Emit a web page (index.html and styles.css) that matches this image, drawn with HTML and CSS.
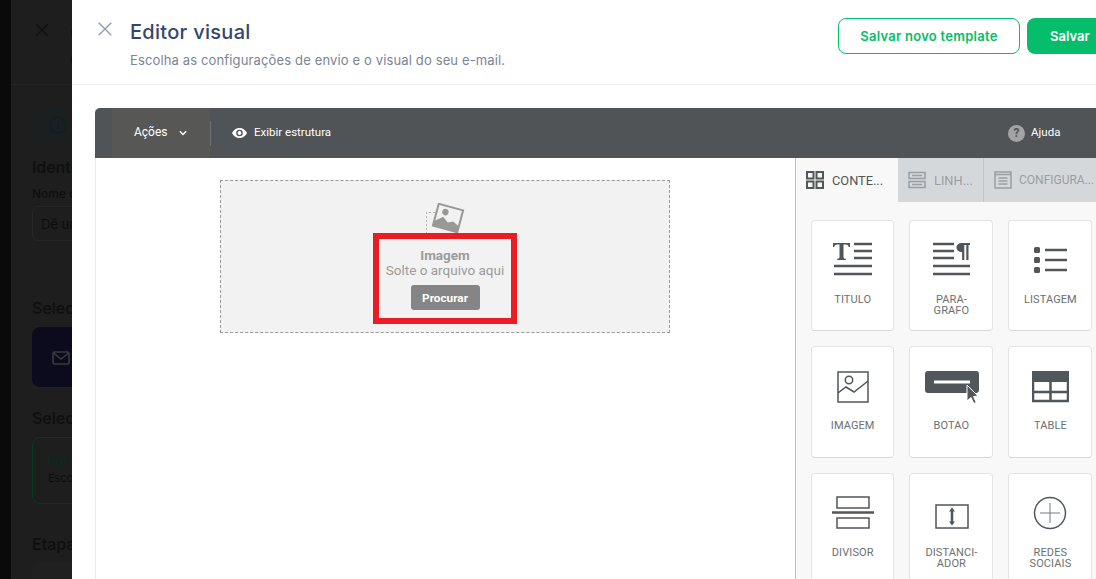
FILE: index.html
```html
<!DOCTYPE html>
<html lang="pt-BR">
<head>
<meta charset="utf-8">
<title>Editor visual</title>
<link rel="stylesheet" href="styles.css">
</head>
<body>
<div class="page">
  <aside class="rail"></aside>
  <div class="behind">
    <div class="behind-head">
      <svg class="behind-x" width="14" height="14" viewBox="0 0 14 14"><path d="M1 1l12 12M13 1L1 13"/></svg>
      <div class="behind-title">Criar<small>Crie</small></div>
    </div>
    <div class="behind-body">
      <div class="b-info"><svg width="18" height="18" viewBox="0 0 18 18"><circle cx="9" cy="9" r="8"/><path d="M9 8v5M9 5v1.500"/></svg></div>
      <h3 class="b-h b-h1">Identificação</h3>
      <p class="b-label">Nome do</p>
      <div class="b-input">Dê um</div>
      <h3 class="b-h b-h2">Selecione</h3>
      <div class="b-card"><svg width="18" height="14" viewBox="0 0 18 14"><rect x="1" y="1" width="16" height="12" rx="1.500"/><path d="M1.500 2l7.500 6 7.500-6"/></svg></div>
      <h3 class="b-h b-h3">Selecione</h3>
      <div class="b-choice"><strong>Por</strong><span>Escolha</span></div>
      <h3 class="b-h b-h4">Etapa</h3>
      <div class="b-last"></div>
    </div>
  </div>

  <section class="modal">
    <header class="m-head">
      <svg class="m-x" width="14" height="14" viewBox="0 0 14 14"><path d="M.7.7l12.600 12.600M13.300.7L.7 13.300"/></svg>
      <div class="m-titles">
        <h1>Editor visual</h1>
        <p>Escolha as configurações de envio e o visual do seu e-mail.</p>
      </div>
      <div class="m-actions">
        <button class="btn btn-outline">Salvar novo template</button>
        <button class="btn btn-solid">Salvar</button>
      </div>
    </header>

    <div class="m-body">
      <div class="editor">
        <div class="toolbar">
          <div class="tb-actions">Ações
            <svg width="8" height="6" viewBox="0 0 8 6"><path d="M.8 1.200L4 4.400l3.200-3.200"/></svg>
          </div>
          <div class="tb-sep"></div>
          <div class="tb-view">
            <svg width="15" height="10" viewBox="0 0 15 10"><path d="M7.500 0C4 0 1.300 2.100 0 5c1.300 2.900 4 5 7.500 5S13.700 7.900 15 5C13.700 2.100 11 0 7.500 0zm0 8.300a3.300 3.300 0 1 1 0-6.600 3.300 3.300 0 0 1 0 6.600zm0-5.200a1.900 1.900 0 1 0 0 3.800 1.900 1.900 0 0 0 0-3.800z"/></svg>
            <span class="tb-text">Exibir estrutura</span>
          </div>
          <div class="tb-help"><span class="tb-q">?</span><span class="tb-text">Ajuda</span></div>
        </div>

        <div class="workspace">
          <div class="canvas">
            <div class="dropzone">
              <svg class="dz-icon" width="42" height="32" viewBox="0 0 42 32">
                <path class="dz-back" d="M9 9.500H.5V32"/>
                <g transform="rotate(15 22 15)">
                  <rect x="9.400" y="3.700" width="25.200" height="22.600" fill="#f2f2f2" stroke="#989996" stroke-width="2"/>
                  <path d="M10 26v-5l7-6 6 4.500 5-2.500 6 3v6z" fill="#989996"/>
                  <circle cx="18" cy="10" r="3.200" fill="#989996"/>
                </g>
              </svg>
              <div class="dz-mark">
                <strong>Imagem</strong>
                <span>Solte o arquivo aqui</span>
                <button class="dz-btn">Procurar</button>
              </div>
            </div>
          </div>

          <aside class="panel">
            <nav class="tabs">
              <div class="tab tab-on tab-1">
                <svg width="18" height="18" viewBox="0 0 18 18"><path d="M1 1h6.500v6.500H1zM10.500 1H17v6.500h-6.500zM1 10.500h6.500V17H1zM10.500 10.500H17V17h-6.500z"/></svg>
                <span>CONTE...</span>
              </div>
              <div class="tab tab-2">
                <svg width="18" height="18" viewBox="0 0 18 18"><path d="M1 1.500h16v6H1zM1 10.500h16v6H1zM4 4.500h10M4 13.500h10"/></svg>
                <span>LINH...</span>
              </div>
              <div class="tab tab-3">
                <svg width="18" height="18" viewBox="0 0 18 18"><path d="M1 1h16v16H1zM1 3.500h16M4.500 7h9M4.500 10h9M4.500 13h9"/></svg>
                <span>CONFIGURA...</span>
              </div>
            </nav>
            <div class="blocks">
              <div class="block">
                <svg class="ico" width="40" height="36" viewBox="0 -1 40 36">
                  <path class="fl" d="M1 1h16v4h-1.300c-.3-1.500-.9-2.400-3-2.400h-2.200V15c0 1.300.6 1.700 2.300 1.800v1.200H4.200v-1.200C5.900 16.700 6.500 16.300 6.500 15V2.600H4.300c-2.100 0-2.700.9-3 2.400H0V1z"/>
                  <path class="ln" d="M21 2h18M21 9h18M21 16h18M1 24h38M1 32h38"/>
                </svg>
                <span>TITULO</span>
              </div>
              <div class="block">
                <svg class="ico" width="38" height="36" viewBox="0 -1 38 36">
                  <path class="ln" d="M0 2h21M0 9h21M0 16h21M0 24h37M0 32h37"/>
                  <path class="fl" d="M37 1v2h-1.500v15h-2.200V3h-2v15h-2.200V10c-3.500 0-5.600-2-5.600-4.500S25.600 1 29 1z"/>
                </svg>
                <span>PARA-<br>GRAFO</span>
              </div>
              <div class="block">
                <svg class="ico" width="34" height="36" viewBox="0 -2 34 36">
                  <rect class="fl" x="0" y="4" width="6" height="6" rx="1.500"/>
                  <rect class="fl" x="0" y="14" width="6" height="6" rx="1.500"/>
                  <rect class="fl" x="0" y="24" width="6" height="6" rx="1.500"/>
                  <path class="ln" d="M11 7h22M11 17h22M11 27h22"/>
                </svg>
                <span>LISTAGEM</span>
              </div>
              <div class="block">
                <svg class="ico" width="32" height="36" viewBox="0 -2 32 36">
                  <rect class="thin" x="1" y="3" width="30" height="30"/>
                  <circle class="thin" cx="12" cy="11" r="3.700"/>
                  <path class="thin" d="M1 24l8-6 8 5 14-11"/>
                </svg>
                <span>IMAGEM</span>
              </div>
              <div class="block">
                <svg class="ico" width="54" height="36" viewBox="0 -1 54 36">
                  <rect class="fl" x="0" y="3" width="54" height="22" rx="3"/>
                  <path d="M9 14h36" stroke="#fff" stroke-width="3" fill="none"/>
                  <path class="fl" d="M42 17l11 11-4.500.5 2.800 6-2.500 1-2.800-6L42 33z" stroke="#fff" stroke-width="1"/>
                </svg>
                <span>BOTAO</span>
              </div>
              <div class="block">
                <svg class="ico" width="37" height="36" viewBox="0 0 37 36">
                  <path class="fl" d="M0 4h37v11H0z"/>
                  <path d="M1 15v19h35V15M0 25h37M18.500 15v19" stroke="#505659" stroke-width="2.500" fill="none"/>
                </svg>
                <span>TABLE</span>
              </div>
              <div class="block">
                <svg class="ico" width="42" height="36" viewBox="0 0 42 36">
                  <rect class="thin" x="5" y="3" width="32" height="11"/>
                  <rect class="thin" x="5" y="24" width="32" height="10"/>
                  <path class="ln" d="M0 18.500h42"/>
                </svg>
                <span>DIVISOR</span>
              </div>
              <div class="block">
                <svg class="ico" width="34" height="36" viewBox="0 -1 34 36">
                  <rect class="thin" x="1" y="10" width="32" height="23"/>
                  <path class="ln" d="M17 15v13"/>
                  <path class="fl" d="M17 12.500l3 4h-6zM17 30.500l3-4h-6z"/>
                </svg>
                <span>DISTANCI-<br>ADOR</span>
              </div>
              <div class="block">
                <svg class="ico" width="34" height="36" viewBox="0 -1 34 36">
                  <circle class="thin" cx="17" cy="18" r="15.500"/>
                  <path class="hair" d="M17 8v20M7 18h20"/>
                </svg>
                <span>REDES<br>SOCIAIS</span>
              </div>
            </div>
          </aside>
        </div>
      </div>
    </div>
  </section>
</div>
</body>
</html>
```

FILE: styles.css
```css
* { box-sizing: border-box; }
html, body { margin: 0; padding: 0; height: 100%; overflow: hidden; }
body { font-family: Inter, "Liberation Sans", sans-serif; background: #1e1e1e; }
h1, h3, p { margin: 0; }
button { font: inherit; border: 0; padding: 0; }

.page { position: relative; display: flex; width: 1096px; height: 579px; overflow: hidden; }

/* dimmed page behind the modal */
.rail { width: 11px; flex: none; background: #0a0a0a; }
.behind { flex: 1; min-width: 0; color: #0f0f0f; background: #1e1e1e; }
.behind-head { height: 85px; display: flex; align-items: flex-start; gap: 21px; padding: 22px 0 0 24px; border-bottom: 1px solid #242424; }
.behind-x { fill: none; stroke: #0f0f0f; stroke-width: 1.300; margin-top: 1px; }
.behind-title { font-size: 20px; font-weight: 500; line-height: 24px; color: #111; }
.behind-title small { display: block; font-size: 13px; font-weight: 400; color: #0f0f0f; line-height: 22px; margin-top: 3px; }
.behind-body { padding: 22px 0 0 21px; }
.b-info { height: 36px; width: 300px; background: #1b1f20; border-radius: 6px; padding: 9px 0 0 17px; }
.b-info svg { fill: none; stroke: #0c2126; stroke-width: 1.600; }
.b-h { font-size: 16px; font-weight: 500; line-height: 20px; color: #0e0e0e; }
.b-h1 { margin-top: 14px; }
.b-label { font-size: 12px; font-weight: 500; line-height: 16px; margin-top: 9px; }
.b-input { margin-top: 4px; height: 35px; width: 300px; border: 1px solid #262626; border-radius: 6px; padding: 9px 8px; font-size: 13px; color: #0d0d0d; }
.b-h2 { margin-top: 57px; }
.b-card { margin-top: 9px; height: 60px; width: 300px; border-radius: 8px; background: #0b0b1d; padding: 22px 0 0 20px; }
.b-card svg { fill: none; stroke: #3a3a3a; stroke-width: 1.600; }
.b-h3 { margin-top: 21px; }
.b-choice { margin-top: 9px; height: 67px; width: 300px; border: 1px solid #063a22; border-radius: 8px; padding: 14px 15px; display: flex; flex-direction: column; }
.b-choice strong { font-size: 13px; font-weight: 600; line-height: 18px; color: #052c18; }
.b-choice span { font-size: 11px; line-height: 17px; color: #0d0d0d; }
.b-h4 { margin-top: 30px; }
.b-last { margin-top: 8px; height: 40px; width: 300px; background: #202020; border-radius: 6px; }

/* modal */
.modal { position: absolute; left: 72px; top: 0; bottom: 0; right: 0; background: #fff; display: flex; flex-direction: column; }
.m-head { height: 85px; flex: none; display: flex; align-items: flex-start; border-bottom: 1px solid #eceef0; padding: 22px 0 0 26px; }
.m-x { fill: none; stroke: #9099ab; stroke-width: 1.300; flex: none; }
.m-titles { margin-left: 18px; flex: none; width: 600px; }
.m-titles h1 { font-size: 20px; font-weight: 500; line-height: 24px; color: #34466f; margin-top: -2px; letter-spacing: .28px; }
.m-titles p { font-size: 13px; line-height: 20px; color: #7a8496; margin-top: 6px; letter-spacing: .14px; }
.m-actions { display: flex; gap: 7px; margin-left: 108px; margin-top: -4px; flex: none; }
.btn { height: 36px; border-radius: 8px; font-size: 13px; font-weight: 600; }
.btn-outline { width: 182px; background: #fff; border: 1px solid #05bd6a; color: #05bd6a; letter-spacing: .27px; padding-bottom: 1px; }
.btn-solid { width: 90px; background: #05bd6a; color: #fff; text-align: left; padding: 0 0 1px 23px; }

.m-body { flex: 1; min-height: 0; padding: 23px 0 0 23px; }
.editor { width: 1100px; height: 100%; border-left: 1px solid #e6e8ea; display: flex; flex-direction: column; }

.toolbar { height: 50px; flex: none; background: #505456; border-radius: 5px 0 0 0; margin-left: -1px; display: flex; align-items: center; color: #fff; font-family: Roboto, "Liberation Sans", sans-serif; font-size: 11.500px; }
.tb-actions { display: flex; align-items: center; gap: 11px; width: 98px; height: 100%; margin-left: 17px; padding: 0 0 2px 22px; font-size: 12px; background: #575756; }
.tb-actions svg { fill: none; stroke: #fff; stroke-width: 1.400; margin-top: 2px; }
.tb-sep { width: 1px; height: 25px; background: #6e7274; }
.tb-view { display: flex; align-items: center; gap: 7px; margin-left: 21px; }
.tb-view svg { fill: #fff; }
.tb-text { margin-bottom: 2px; }
.tb-help { display: flex; align-items: center; gap: 6px; margin-left: 677px; font-size: 11.500px; }
.tb-q { width: 17px; height: 17px; border-radius: 50%; background: #a1a3a4; color: #505456; font-weight: 700; font-size: 12px; display: flex; align-items: center; justify-content: center; }

.workspace { flex: 1; min-height: 0; display: flex; }
.canvas { width: 699px; flex: none; background: #fff; padding: 22px 0 0 124px; }
.dropzone { width: 450px; height: 153px; background: #f2f2f2; border: 1px dashed #9a9a9a; display: flex; flex-direction: column; align-items: center; position: relative; padding-top: 52px; }
.dz-icon { position: absolute; left: 205px; top: 22px; }
.dz-back { fill: none; stroke: #b5b5b5; stroke-width: 1; stroke-dasharray: 2 2; }
.dz-mark { position: relative; width: 144px; height: 91px; border: 6px solid #ec1c24; display: flex; flex-direction: column; align-items: center; padding-top: 9px; color: #9b9b9b; font-family: Roboto, "Liberation Sans", sans-serif; background: #f2f2f2; }
.dz-mark strong { font-size: 13.500px; font-weight: 700; line-height: 15px; }
.dz-mark span { font-size: 13.500px; line-height: 15px; }
.dz-btn { margin-top: 7px; width: 69px; height: 25px; background: #858585; border-radius: 3px; color: #fff; font-family: Roboto, "Liberation Sans", sans-serif; font-size: 11.800px; font-weight: 700; }

.panel { flex: 1; min-width: 0; background: #f8f8f8; border-left: 1px solid #bcc0c4; display: flex; flex-direction: column; }
.tabs { height: 44px; flex: none; display: flex; font-family: Roboto, "Liberation Sans", sans-serif; font-size: 12.800px; }
.tab { display: flex; align-items: center; gap: 8px; background: #d5d8db; color: #9a9ea2; padding-left: 10px; border-right: 1px solid #c3c6c9; white-space: nowrap; }
.tab svg { fill: none; stroke: #9a9ea2; stroke-width: 1.500; flex: none; }
.tab-on { background: #f8f8f8; color: #505659; border-right: 0; }
.tab-on svg { stroke: #505659; stroke-width: 2; }
.tab-1 { width: 102px; }
.tab-2 { width: 86px; }
.tab-3 { flex: 1; min-width: 0; border-right: 0; gap: 7px; font-size: 12px; }
.blocks { display: grid; grid-template-columns: 83.400px 84px 84px; column-gap: 15px; row-gap: 15px; padding: 18px 0 0 15px; }
.block { height: 111.400px; background: #fff; border: 1px solid #e4e4e4; border-bottom-color: #d8d8d8; border-radius: 4px; display: flex; flex-direction: column; align-items: center; padding-top: 20px; font-family: Roboto, "Liberation Sans", sans-serif; font-size: 11px; line-height: 11px; letter-spacing: .1px; color: #6b6f72; text-align: center; }
.block span { margin-top: 17px; }
.ico { flex: none; }
.block:nth-child(3n+2) .ico { margin-left: 1.200px; }
.block:nth-child(3) .ico { margin-left: 2px; }
.fl { fill: #505659; }
.ln { stroke: #505659; stroke-width: 2.500; fill: none; }
.thin { stroke: #505659; stroke-width: 1.500; fill: none; }
.hair { stroke: #777b7e; stroke-width: 1; fill: none; }
```
